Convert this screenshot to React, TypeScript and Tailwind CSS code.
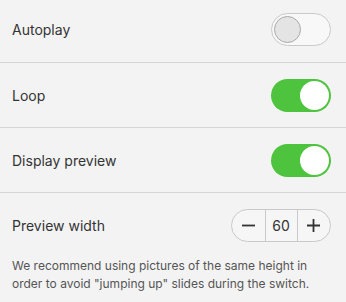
import { useState } from "react";

function Toggle({ on, onChange }: { on: boolean; onChange: () => void }) {
  return (
    <button
      type="button"
      onClick={onChange}
      className={
        on
          ? "w-[60px] h-[33px] rounded-full bg-[#4dc33e] flex items-center justify-end px-[2px]"
          : "w-[60px] h-[33px] rounded-full bg-[#f8f8f8] border border-[#c9c9c9] flex items-center justify-start px-[2px]"
      }>
      <span
        className={
          on
            ? "w-[29px] h-[29px] rounded-full bg-white"
            : "w-[27px] h-[27px] rounded-full bg-[#e4e4e4] border border-[#a9a9a9]"
        }
      />
    </button>
  );
}

function App() {
  const [autoplay, setAutoplay] = useState(false);
  const [loop, setLoop] = useState(true);
  const [preview, setPreview] = useState(true);
  const [width, setWidth] = useState(60);

  return (
    <div
      className="w-[346px] h-[302px] bg-[#f3f3f3] text-[#333] overflow-hidden"
      style={{ fontFamily: "Inter, 'Noto Sans', sans-serif" }}>
      <div className="h-[63px] flex items-center justify-between pl-3 pr-[15px] pb-[3px] border-b border-[#d5d5d5]">
        <span className="text-[14px]">Autoplay</span>
        <Toggle on={autoplay} onChange={() => setAutoplay(!autoplay)} />
      </div>
      <div className="h-[65px] flex items-center justify-between pl-3 pr-[15px] border-b border-[#d5d5d5]">
        <span className="text-[14px]">Loop</span>
        <Toggle on={loop} onChange={() => setLoop(!loop)} />
      </div>
      <div className="h-[65px] flex items-center justify-between pl-3 pr-[15px] border-b border-[#d5d5d5]">
        <span className="text-[14px]">Display preview</span>
        <Toggle on={preview} onChange={() => setPreview(!preview)} />
      </div>
      <div className="pl-3 pr-[15px] pt-[16px]">
        <div className="flex items-center justify-between">
          <span className="text-[14px]">Preview width</span>
          <div className="w-[100px] h-[33px] rounded-full border border-[#c9c9c9] flex items-stretch bg-[#f6f6f6]">
            <button
              type="button"
              onClick={() => setWidth(width - 1)}
              className="flex-1 flex items-center justify-center">
              <svg width="13" height="13" viewBox="0 0 13 13">
                <path d="M0 6.5H13" stroke="#333" strokeWidth="1.8" />
              </svg>
            </button>
            <div className="w-[33px] border-x border-[#c9c9c9] flex items-center justify-center text-[14px]">
              {width}
            </div>
            <button
              type="button"
              onClick={() => setWidth(width + 1)}
              className="flex-1 flex items-center justify-center">
              <svg width="13" height="13" viewBox="0 0 13 13">
                <path d="M0 6.5H13M6.5 0V13" stroke="#333" strokeWidth="1.8" />
              </svg>
            </button>
          </div>
        </div>
        <p className="mt-[15px] text-[12px] leading-[18px] text-[#555]">
          We recommend using pictures of the same height in order to avoid
          "jumping up" slides during the switch.
        </p>
      </div>
    </div>
  );
}

export default App;
